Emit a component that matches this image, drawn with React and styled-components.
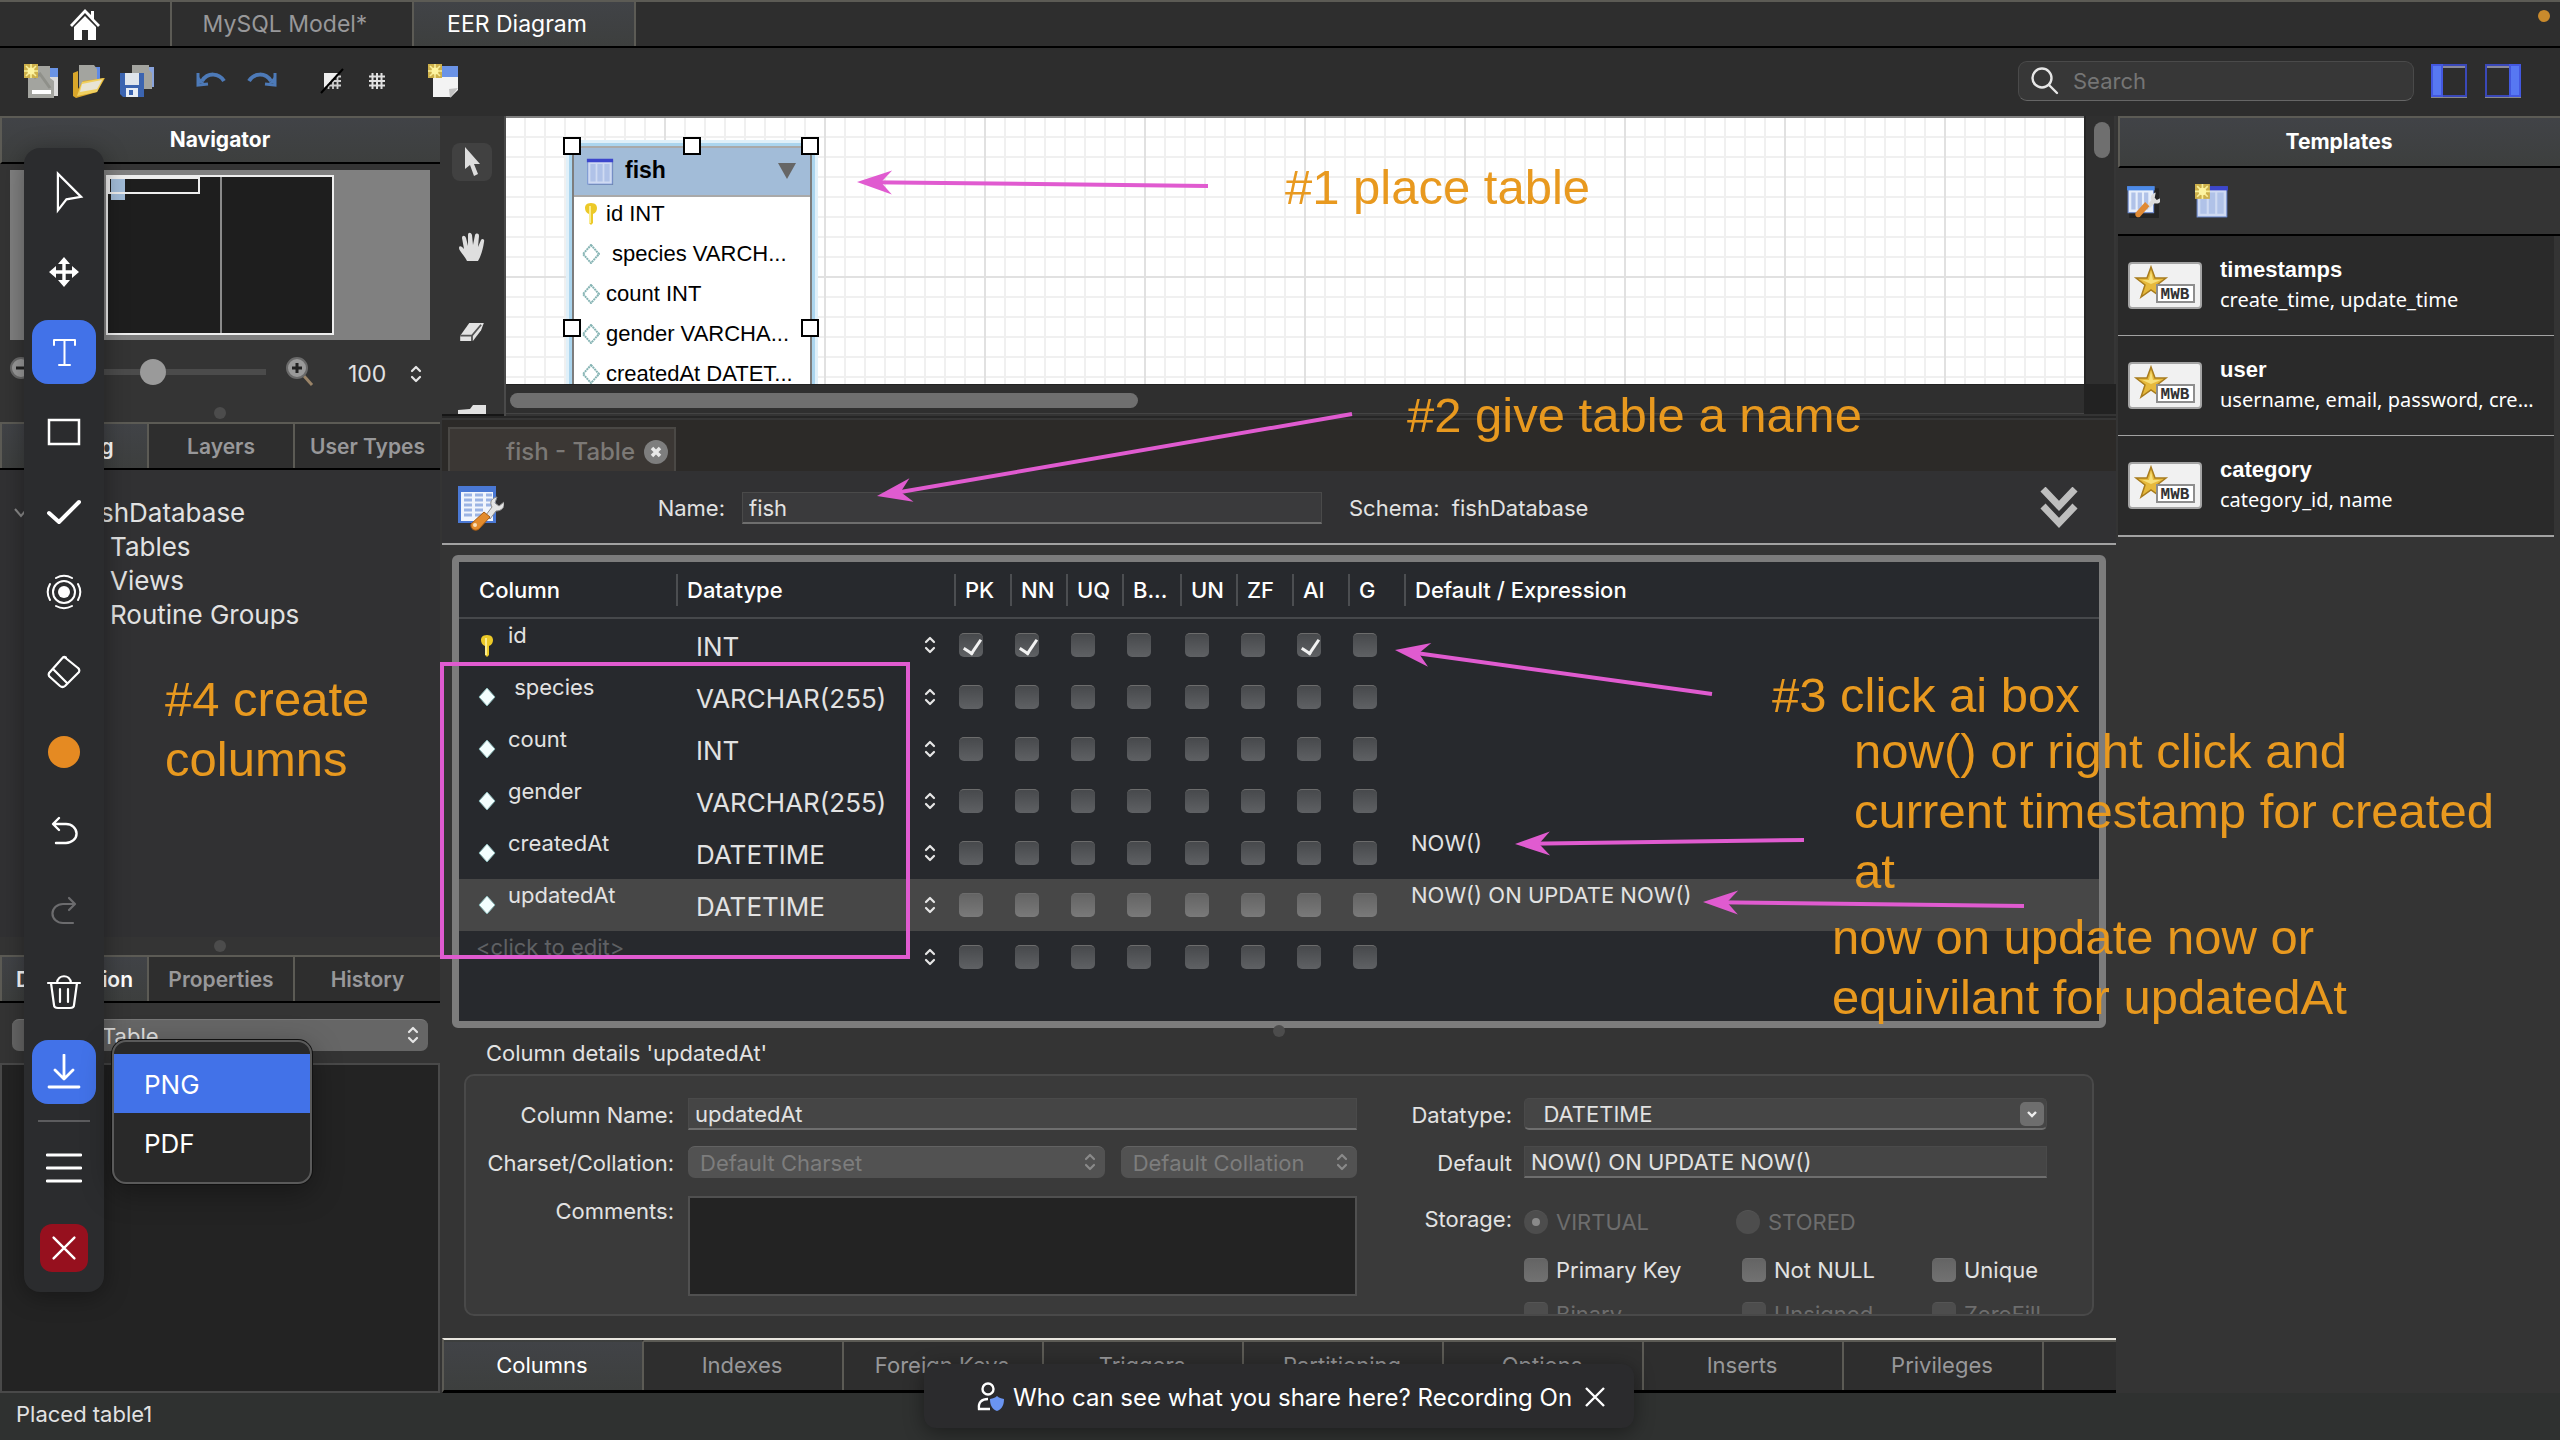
import React from "react";
import styled, { createGlobalStyle, css } from "styled-components";

const ui = `Inter, "Liberation Sans", sans-serif`;
const helv = `"Liberation Sans", Arial, sans-serif`;
const pink = "#e05bd0";

const Global = createGlobalStyle`
  * { box-sizing: border-box; }
  body { margin: 0; background: #343434; font-family: ${ui}; font-size: 22px; color: #e2e2e2; }
  button, input, select, textarea { font: inherit; color: inherit; margin: 0; }
  button { border: 0; background: none; padding: 0; }
  svg { display: block; }
`;

const Page = styled.div`
  position: relative;
  display: flex;
  flex-direction: column;
  min-height: 100vh;
  overflow: hidden;
`;

/* ---------- top bars ---------- */
const TopTabs = styled.nav`
  display: flex;
  height: 48px;
  border-top: 2px solid #5c5b55;
  border-bottom: 2px solid #000;
  background: #2e2e2e;
`;
const TopTab = styled.button`
  width: ${(p) => p.$w}px;
  display: flex;
  align-items: center;
  justify-content: center;
  padding-right: ${(p) => (p.$icon ? 0 : 14)}px;
  border-right: 2px solid #5c5b55;
  font-size: 23px;
  color: ${(p) => (p.$on ? "#fff" : "#98989a")};
  background: ${(p) => (p.$on ? "linear-gradient(#414347, #3d3f3e)" : "transparent")};
`;
const RecDot = styled.span`
  width: 12px;
  height: 12px;
  margin: 8px 10px 0 auto;
  border-radius: 50%;
  background: #c98a2c;
`;
const Toolbar = styled.div`
  display: flex;
  align-items: center;
  height: 68px;
  padding: 0 39px 2px 24px;
  background: #2d2d2d;
`;
const ToolGroup = styled.div`
  display: flex;
  align-items: center;
  gap: ${(p) => p.$gap}px;
  margin-right: ${(p) => p.$after}px;
`;
const SearchBox = styled.label`
  display: flex;
  align-items: center;
  gap: 12px;
  width: 396px;
  height: 40px;
  margin-left: auto;
  margin-right: 17px;
  padding: 0 12px;
  border: 1px solid #4a4a4a;
  border-bottom-color: #666;
  border-radius: 9px;
  background: #373737;
`;
const SearchInput = styled.input`
  flex: 1;
  min-width: 0;
  border: 0;
  outline: 0;
  background: transparent;
  font-size: 22px;
  &::placeholder { color: #757575; }
`;

/* ---------- main split ---------- */
const Main = styled.main`
  flex: 1;
  display: flex;
  gap: 2px;
`;
const LeftCol = styled.aside`
  width: 440px;
  display: flex;
  flex-direction: column;
`;
const CenterCol = styled.section`
  flex: 1;
  min-width: 0;
  display: flex;
  flex-direction: column;
`;
const RightCol = styled.aside`
  width: 442px;
`;
const PanelTitle = styled.h2`
  margin: 0;
  height: ${(p) => p.$h}px;
  display: flex;
  align-items: center;
  justify-content: center;
  padding: 0 2px 2px 0;
  font-size: 21px;
  font-weight: 700;
  color: #fff;
  border-top: 2px solid #5c5b55;
  border-left: 2px solid #5c5b55;
  border-bottom: 2px solid #000;
  background: linear-gradient(#414347, #3d3f3e);
`;
const PanelTabs = styled.div`
  display: grid;
  grid-template-columns: 149px 146px 1fr;
  height: 48px;
  border-top: 2px solid #5c5b55;
  border-bottom: 2px solid #000;
`;
const PanelTab = styled.button`
  font-size: 21px;
  font-weight: 600;
  color: ${(p) => (p.$on ? "#fff" : "#98989a")};
  background: ${(p) => (p.$on ? "linear-gradient(#414347, #3d3f3e)" : "#2e2e2e")};
  border-right: 2px solid #5c5b55;
  &:first-child { border-left: 2px solid #5c5b55; }
  &:last-child { border-right: 0; }
`;
const Grip = styled.div`
  height: 18px;
  display: flex;
  align-items: center;
  justify-content: center;
  &::after {
    content: "";
    width: 12px;
    height: 12px;
    border-radius: 50%;
    background: #4c4c4c;
  }
`;

/* ---------- navigator ---------- */
const NavView = styled.div`
  height: 170px;
  margin: 6px 10px 0;
  padding: 5px 96px;
  background: #808080;
`;
const NavPage = styled.div`
  position: relative;
  height: 160px;
  border: 2px solid #eee;
  background: linear-gradient(90deg, transparent 112px, #8a8a8a 112px, #8a8a8a 114px, transparent 114px) #1e1e1e;
`;
const NavTable = styled.div`
  position: absolute;
  left: 3px;
  top: 1px;
  width: 14px;
  height: 22px;
  background: #a2bcd8;
`;
const NavPort = styled.div`
  position: absolute;
  left: 0;
  top: 0;
  width: 92px;
  height: 17px;
  border: 2px solid #eee;
`;
const ZoomRow = styled.div`
  display: flex;
  align-items: center;
  height: 64px;
  padding: 0 18px 0 10px;
`;
const ZoomSlider = styled.input`
  appearance: none;
  width: 220px;
  height: 26px;
  margin: 0 20px 0 8px;
  background: linear-gradient(#4b4b4b, #4b4b4b) center / 100% 6px no-repeat;
  border-radius: 3px;
  &::-webkit-slider-thumb {
    appearance: none;
    width: 26px;
    height: 26px;
    border-radius: 50%;
    background: #9a9a9a;
  }
`;
const ZoomValue = styled.label`
  display: flex;
  align-items: center;
  justify-content: flex-end;
  gap: 18px;
  flex: 1;
  padding-top: 4px;
`;
const ZoomInput = styled.input`
  width: 44px;
  padding: 0;
  border: 0;
  background: transparent;
  font-size: 23px;
`;

/* ---------- catalog tree ---------- */
const Tree = styled.ul`
  flex: 1;
  margin: 0;
  padding: 26px 0 0 14px;
  list-style: none;
  background: #313133;
  font-size: 26px;
  line-height: 34px;
`;
const TreeNode = styled.li`
  display: flex;
  align-items: center;
  gap: 56px;
  padding-left: ${(p) => p.$indent}px;
`;
const SelectWrap = styled.span`
  position: relative;
  display: flex;
  align-items: center;
  ${(p) => p.$grow && css`flex: ${p.$grow} 1 0;`}
  & > svg {
    position: absolute;
    right: ${(p) => p.$right || 9}px;
    pointer-events: none;
  }
`;
const Popup = styled.select`
  appearance: none;
  width: 100%;
  height: 32px;
  padding: 0 12px;
  border: 0;
  border-top: 1px solid #777;
  border-radius: 7px;
  background: #666;
  opacity: 1;
  &:disabled { background: #525252; border-top-color: #626262; color: #7d7d7d; }
`;
const DescSelect = styled.div`
  padding: 16px 12px 12px;
  & select { padding-left: 90px; }
`;
const DescText = styled.textarea`
  height: 330px;
  resize: none;
  border: 2px solid #494949;
  background: #232323;
  outline: 0;
`;

/* ---------- canvas ---------- */
const CanvasRow = styled.div`
  display: flex;
  height: 300px;
`;
const ToolStrip = styled.div`
  width: 62px;
  display: flex;
  flex-direction: column;
  align-items: center;
  gap: 47px;
  padding-top: 27px;
  padding-right: 2px;
  overflow: hidden;
  border-bottom: 2px solid #161616;
`;
const StripButton = styled.button`
  flex: none;
  display: flex;
  align-items: center;
  justify-content: center;
  width: 40px;
  height: 38px;
  border-radius: 8px;
  background: ${(p) => (p.$on ? "#414141" : "transparent")};
`;
const CanvasArea = styled.div`
  flex: 1;
  min-width: 0;
  display: grid;
  grid-template-columns: 1fr 32px;
  grid-template-rows: 268px 30px;
  border-left: 2px solid #4a4a4a;
`;
const Sheet = styled.div`
  position: relative;
  overflow: hidden;
  border-top: 2px solid #808080;
  background:
    repeating-linear-gradient(90deg, transparent 0 158px, #e1e1e1 158px 160px),
    linear-gradient(transparent 158px, #e1e1e1 158px, #e1e1e1 160px, transparent 160px),
    repeating-linear-gradient(90deg, transparent 0 18px, #f0f0f0 18px 20px),
    repeating-linear-gradient(180deg, transparent 0 18px, #f0f0f0 18px 20px),
    #fff;
`;
const VScroll = styled.div`
  padding: 6px 0 0 8px;
  background: #2f2f2f;
  border-left: 2px solid #262626;
  border-right: 2px solid #363636;
`;
const HScroll = styled.div`
  padding: 8px 4px;
  background: #2f2f2f;
  border-top: 1px solid #222;
  border-bottom: 1px solid #444;
`;
const Thumb = styled.div`
  width: ${(p) => p.$w};
  height: ${(p) => p.$h}px;
  border-radius: 8px;
  background: #6f6f6f;
`;
const Corner = styled.div`
  background: #222;
`;
const Node = styled.div`
  position: absolute;
  left: 66px;
  top: 28px;
  width: 240px;
  height: 364px;
  border: 2px solid #8a8a8a;
  border-color: #a9a9a9 #7d7d7d;
  border-radius: 10px 10px 0 0;
  background: #fff;
  color: #000;
  font-family: ${helv};
  box-shadow: 0 0 0 3px #abd5ee, 0 0 0 6px #e0f0f9;
`;
const NodeHead = styled.div`
  display: flex;
  align-items: center;
  height: 49px;
  gap: 11px;
  padding: 0 14px 2px 12px;
  border-bottom: 2px solid #a9a9a9;
  border-radius: 8px 8px 0 0;
  background: #a2bcd8;
  font-size: 23px;
  font-weight: 700;
  & > svg:last-child { margin-left: auto; }
`;
const NodeRow = styled.div`
  display: flex;
  align-items: center;
  gap: 6px;
  height: 40px;
  padding: 0 0 6px 8px;
  white-space: pre;
  & > svg { flex: none; }
`;
const Handle = styled.span`
  position: absolute;
  left: ${(p) => p.$x}px;
  top: ${(p) => p.$y}px;
  width: 18px;
  height: 18px;
  border: 2px solid #000;
  background: #fff;
`;

/* ---------- table editor ---------- */
const Editor = styled.div`
  flex: 1;
  display: flex;
  flex-direction: column;
  border-top: 2px solid #262626;
`;
const EditorTabs = styled.div`
  height: 53px;
  padding: 9px 6px 0;
  background: #2c2a28;
  border-top: 2px solid #363636;
`;
const EditorTab = styled.div`
  display: flex;
  align-items: center;
  justify-content: flex-end;
  gap: 8px;
  width: 228px;
  height: 44px;
  margin-top: -2px;
  padding: 3px 5px 0;
  border: 2px solid #4a4845;
  border-bottom: 0;
  background: #3b3734;
  color: #7c7976;
  font-size: 24px;
  font-weight: 500;
`;
const EditorHead = styled.div`
  display: flex;
  align-items: center;
  height: 74px;
  padding: 2px 38px 0 16px;
  background: #313133;
  border-bottom: 2px solid #a2a2a2;
`;
const HeadLabel = styled.label`
  width: ${(p) => p.$w}px;
  margin-right: 17px;
  text-align: right;
`;
const Field = styled.input`
  width: ${(p) => p.$w || "100%"};
  height: 32px;
  padding: 1px 6px 0;
  border: 1px solid #4a4a4a;
  border-bottom: 2px solid #6e6e6e;
  border-radius: ${(p) => (p.$combo ? "5px" : "0")};
  background: ${(p) => p.$bg || "#454545"};
  outline: 0;
`;
const SchemaText = styled.span`
  margin: 0 auto 0 27px;
  white-space: pre;
`;
const GridFrame = styled.div`
  height: 473px;
  margin: 10px 10px 0;
  border: 7px solid #7c7c7c;
  border-radius: 6px;
  background: #27292d;
`;
const Grid = styled.table`
  width: 100%;
  border-collapse: collapse;
  table-layout: fixed;
`;
const HeadCell = styled.th`
  height: 56px;
  padding: 1px 0 0;
  border-bottom: 2px solid #46484b;
  text-align: left;
  font-size: 22px;
  font-weight: 500;
  color: #fff;
`;
const HeadText = styled.span`
  display: flex;
  align-items: center;
  height: 32px;
  padding-left: ${(p) => (p.$first ? 20 : 9)}px;
  border-left: ${(p) => (p.$first ? 0 : 2)}px solid #4c4e51;
`;
const GridRow = styled.tr`
  background: ${(p) => (p.$on ? "#474747" : "transparent")};
  --box: ${(p) => (p.$on ? "linear-gradient(#646464, #7a7a7a)" : "linear-gradient(#47494c, #5f6164)")};
`;
const Cell = styled.td`
  height: 52px;
  padding: ${(p) => p.$pad || "0"};
  vertical-align: ${(p) => (p.$top ? "top" : "middle")};
  line-height: 26px;
  white-space: pre;
`;
const NameLine = styled.div`
  display: flex;
  gap: 12px;
  color: ${(p) => (p.$dim ? "#5f6164" : "inherit")};
  & > svg { flex: none; margin-top: 13px; }
`;
const TypeSelect = styled.select`
  appearance: none;
  width: 100%;
  height: 52px;
  padding: 4px 0 0 20px;
  border: 0;
  background: transparent;
  font-size: 26px;
`;
const Tick = styled.input`
  appearance: none;
  position: relative;
  flex: none;
  display: block;
  width: 24px;
  height: 24px;
  border-radius: ${(p) => (p.type === "radio" ? "50%" : "5px")};
  border-top: 1px solid #6c6c6c;
  background: var(--box, linear-gradient(#646464, #727272));
  &:disabled { background: #4d4d4d; border-top-color: #555; }
  ${(p) => p.type === "checkbox" && css`
    &:checked::after {
      content: "";
      position: absolute;
      left: 8px;
      top: 2px;
      width: 8px;
      height: 15px;
      border: solid #f2f2f2;
      border-width: 0 3px 3px 0;
      transform: rotate(34deg);
    }
  `}
  ${(p) => p.type === "radio" && css`
    &:checked::after {
      content: "";
      position: absolute;
      left: 8px;
      top: 7px;
      width: 8px;
      height: 8px;
      border-radius: 50%;
      background: #8a8a8a;
    }
  `}
`;
const EditorGrip = styled(Grip)`
  height: 12px;
  margin-top: -3px;
`;
const DetailsTitle = styled.h3`
  margin: 0;
  padding: 4px 44px 8px;
  font-size: 22px;
  line-height: 25px;
  font-weight: 400;
`;
const Details = styled.div`
  display: flex;
  height: 242px;
  margin: 0 22px 22px;
  padding: 22px 45px 0 0;
  overflow: hidden;
  border: 2px solid #494949;
  border-radius: 10px;
  background: #3a3a3a;
`;
const FormGrid = styled.div`
  flex: ${(p) => p.$flex} 1 0;
  display: grid;
  grid-template-columns: ${(p) => p.$label}px 1fr;
  column-gap: ${(p) => p.$gap}px;
  row-gap: 16px;
  align-content: start;
`;
const Label = styled.label`
  line-height: 34px;
  height: 32px;
  text-align: right;
  white-space: nowrap;
`;
const PairRow = styled.div`
  display: flex;
  gap: 16px;
`;
const Comments = styled.textarea`
  height: 100px;
  margin-top: 2px;
  resize: none;
  border: 2px solid #505050;
  background: #232323;
  outline: 0;
`;
const StorageLabel = styled(Label)`
  margin-top: 8px;
`;
const Choices = styled.div`
  display: grid;
  grid-template-columns: ${(p) => p.$cols};
  height: 32px;
  align-items: center;
`;
const StorageChoices = styled(Choices)`
  margin-top: 12px;
`;
const ChoiceRows = styled.div`
  grid-column: 2;
  display: grid;
  gap: 12px;
`;
const Choice = styled.label`
  display: flex;
  align-items: center;
  gap: 8px;
  white-space: nowrap;
  color: ${(p) => (p.$dim ? "#6d6d6d" : "inherit")};
`;
const ComboButton = styled.span`
  position: absolute;
  right: 3px;
  top: 4px;
  width: 24px;
  height: 24px;
  display: flex;
  align-items: center;
  justify-content: center;
  border-radius: 5px;
  background: #6e6e6e;
`;
const BottomTabs = styled.div`
  display: flex;
  height: 55px;
  margin-top: auto;
  border-top: 2px solid #e8e6df;
  border-bottom: 3px solid #000;
  border-left: 2px solid #5c5b55;
  background: #2e2e2e;
`;
const BottomTab = styled.button`
  flex: 0 0 200px;
  padding: 0 2px 2px 0;
  border-top: 2px solid ${(p) => (p.$on ? "transparent" : "#5c5b55")};
  border-right: 2px solid #5c5b55;
  color: ${(p) => (p.$on ? "#fff" : "#98989a")};
  background: ${(p) => (p.$on ? "linear-gradient(#414347, #3d3f3e)" : "transparent")};
`;
const BottomRest = styled.div`
  flex: 1;
  border-top: 2px solid #5c5b55;
`;

/* ---------- templates ---------- */
const TemplateTools = styled.div`
  display: flex;
  align-items: center;
  gap: 35px;
  height: 68px;
  padding-left: 8px;
  border-bottom: 2px solid #000;
`;
const TemplateList = styled.ul`
  margin: 0 6px 0 0;
  padding: 0;
  list-style: none;
  background: #2a2a2a;
  border-bottom: 1px solid #a2a2a2;
`;
const TemplateItem = styled.li`
  display: flex;
  align-items: center;
  gap: 18px;
  height: 100px;
  padding: 0 6px 2px 10px;
  border-bottom: 1px solid #a2a2a2;
  color: #fff;
`;
const TemplateText = styled.div`
  min-width: 0;
  font-family: "Noto Sans", sans-serif;
  font-size: 20px;
  line-height: 30px;
  & > p { margin: 0; white-space: nowrap; }
`;
const TemplateName = styled.strong`
  font-family: ${helv};
  font-size: 22px;
`;
const Status = styled.footer`
  height: 47px;
  padding: 7px 16px;
  line-height: 28px;
  background: #2f3130;
`;

/* ---------- overlays ---------- */
const Markup = styled.svg`
  position: absolute;
  left: 0;
  top: 0;
  pointer-events: none;
`;
const Note = styled.p`
  position: absolute;
  left: ${(p) => p.$x}px;
  top: ${(p) => p.$y}px;
  margin: 0;
  font-family: ${helv};
  font-weight: 300;
  font-size: 49px;
  line-height: 60px;
  white-space: pre;
  color: #e8991f;
`;
const Palette = styled.div`
  position: absolute;
  left: 24px;
  top: 148px;
  width: 80px;
  display: flex;
  flex-direction: column;
  align-items: center;
  gap: 16px;
  padding: 12px 0 20px;
  border-radius: 16px;
  background: #2b2c2e;
  box-shadow: 0 4px 24px rgba(0, 0, 0, 0.35);
`;
const PaletteButton = styled.button`
  display: flex;
  align-items: center;
  justify-content: center;
  width: 64px;
  height: 64px;
  border-radius: 16px;
  color: #fff;
  background: ${(p) => (p.$on ? "#4272e8" : "transparent")};
`;
const PaletteRule = styled.hr`
  width: 52px;
  height: 2px;
  margin: 0 0 -2px;
  border: 0;
  background: #5c5c5e;
`;
const CloseButton = styled(PaletteButton)`
  width: 48px;
  height: 48px;
  margin-top: 8px;
  border-radius: 12px;
  background: #96101e;
`;
const Swatch = styled.span`
  width: 32px;
  height: 32px;
  border-radius: 50%;
  background: #e58a22;
`;
const ExportMenu = styled.div`
  position: absolute;
  left: 112px;
  top: 1040px;
  width: 200px;
  padding: 12px 0;
  height: 144px;
  border: 2px solid #5a5a5a;
  border-radius: 14px;
  background: #292929;
  box-shadow: 0 0 0 1px #111, 0 8px 30px rgba(0, 0, 0, 0.35);
`;
const MenuItem = styled.button`
  display: block;
  width: 100%;
  height: 59px;
  padding: 2px 0 0 30px;
  text-align: left;
  font-size: 26px;
  color: #fff;
  background: ${(p) => (p.$on ? "#4272e8" : "transparent")};
`;
const Toast = styled.div`
  position: absolute;
  left: 924px;
  bottom: 12px;
  width: 710px;
  height: 64px;
  display: flex;
  align-items: center;
  padding: 2px 29px 0 53px;
  border-radius: 12px;
  background: #2b2b2d;
  box-shadow: 0 4px 20px rgba(0, 0, 0, 0.4);
  color: #fff;
  font-size: 24px;
  white-space: nowrap;
  & > span { margin: 0 auto 0 8px; }
`;

/* ---------- icons ---------- */
const Stepper = ({ color = "#e6e6e6" }) => (
  <svg width="12" height="18" viewBox="0 0 12 18" fill="none" stroke={color} strokeWidth="2.2" strokeLinecap="round" strokeLinejoin="round">
    <path d="M2 6l4-4 4 4M2 12l4 4 4-4" />
  </svg>
);
const Spark = () => (
  <g>
    <rect x="0" y="0" width="14" height="14" fill="#cdb04a" />
    <path d="M7 0v14M0 7h14M2 2l10 10M12 2L2 12" stroke="#f8ee98" strokeWidth="1.600" />
    <circle cx="7" cy="7" r="3.500" fill="#fdf4a0" />
  </g>
);
const NewModelIcon = () => (
  <svg width="34" height="34" viewBox="0 0 34 34">
    <path d="M24 4h10v28h-6z" fill="#dcdcdc" /><path d="M26 4h8v9h-8z" fill="#6a94e6" />
    <path d="M4 2h22v12l4 3v17H4z" fill="#a3a49f" />
    <path d="M10 14l6-4 10 14" stroke="#8f908a" strokeWidth="3" fill="none" />
    <path d="M8 26h19v4H8z" fill="#fff" /><Spark />
  </svg>
);
const OpenIcon = () => (
  <svg width="34" height="34" viewBox="0 0 34 34">
    <path d="M20 3h8v14h-8z" fill="#5f8ae6" /><path d="M7 1h15l3 4v18H7z" fill="#a3a49f" />
    <path d="M1 9l5-2v18l5-8 22-3-8 14-21 6-3-2z" fill="#d9a62a" />
    <path d="M5 32l5-14 22-4-7 14z" fill="#f0d060" /><path d="M10 20l20-4-5 9-17 3z" fill="#e8e4d4" />
  </svg>
);
const SaveIcon = () => (
  <svg width="34" height="34" viewBox="0 0 34 34">
    <path d="M26 3h8v20h-8z" fill="#8aa4dc" /><path d="M12 1h17v5l3 3v16H12z" fill="#a3a49f" />
    <path d="M0 9h24v24H3l-3-3z" fill="#3b64b0" /><path d="M5 9h14v12H5z" fill="#dfe5ec" /><path d="M6 24h12v9H6z" fill="#e8eef6" /><path d="M9 26h4v5H9z" fill="#3b64b0" />
  </svg>
);
const UndoArrow = ({ flip }) => (
  <svg width="31" height="20" viewBox="0 0 31 20">
    <g transform={flip ? "translate(31 0) scale(-1 1)" : undefined}>
      <path d="M6 10C12 1 23 2 28 10" fill="none" stroke="#4d7ab8" strokeWidth="4" />
      <path d="M2 2v12l10-1" fill="none" stroke="#4d7ab8" strokeWidth="3" />
      <path d="M3 12V6l5 6z" fill="#4d7ab8" />
    </g>
  </svg>
);
const hash = "M3.500 0v16M8 0v16M12.500 0v16M0 3.500h16M0 8h16M0 12.500h16";
const GridIcon = () => (
  <svg width="16" height="16" viewBox="0 0 16 16"><path d={hash} stroke="#e0e0e0" strokeWidth="2" /></svg>
);
const GridOffIcon = () => (
  <svg width="24" height="26" viewBox="0 0 24 26">
    <path d={hash} stroke="#d0d0d0" strokeWidth="1.800" transform="translate(5 5)" />
    <path d="M4 5h14L4 20z" fill="#eee" />
    <path d="M1 25L23 1" stroke="#000" strokeWidth="2" />
  </svg>
);
const NewDocIcon = () => (
  <svg width="31" height="34" viewBox="0 0 31 34">
    <path d="M5 2h25v24l-7 7H5z" fill="#f3f3f3" /><path d="M5 2h25v11H5z" fill="#6b93e6" /><path d="M22 34l-1-9 9-1z" fill="#c2c2c2" /><Spark />
  </svg>
);
const SideIcon = ({ right }) => (
  <svg width="36" height="34" viewBox="0 0 36 34">
    <path d="M0 33h36" stroke="#8a8a8a" strokeWidth="2" />
    <rect x="1" y="1" width="34" height="31" fill="none" stroke="#3a48b8" strokeWidth="2" />
    <rect x={right ? 25 : 1} y="1" width="10" height="31" fill="#5778f2" stroke="#4358e0" strokeWidth="2" />
    <path d={right ? "M2 3h22" : "M12 3h22"} stroke="#8a8a9a" strokeWidth="2" />
  </svg>
);
const ZoomIcon = ({ sign }) => (
  <svg width="28" height="30" viewBox="0 0 28 30">
    <path d="M18 19l8 9" stroke="#9a8468" strokeWidth="3" />
    <circle cx="11" cy="11" r="10" fill="#9a9a9a" stroke="#6a6a6a" strokeWidth="2" />
    <path d={sign === "+" ? "M6 11h10M11 6v10" : "M6 11h10"} stroke="#222" strokeWidth="3" />
  </svg>
);
const TableIcon = ({ size = 28, spark, wrench }) => (
  <svg width={size} height={size} viewBox="0 0 32 32">
    <rect x="3" y="4" width="28" height="28" fill="#000" opacity=".3" />
    <rect x="2" y="3" width={wrench ? 24 : 28} height={wrench ? 24 : 28} fill={wrench ? "#e6eefb" : "#cfdaf2"} stroke="#6f8cd0" />
    <path d={wrench ? "M5 8h4v16H5zM11 8h4v16h-4zM17 8h4v16h-4z" : "M5 8h6v20H5zM13 8h6v20h-6zM21 8h6v20h-6z"} fill="#b0c2e8" />
    <rect x="1" y="2" width={wrench ? 26 : 30} height="4" fill={wrench ? "#4c8ae8" : "#3c46cc"} />
    {spark && <Spark />}
    {wrench && (
      <g>
        <path d="M19 21l5-6c-2-4 1-6 4-7l-1 5 2 2 4-2c0 5-3 6-6 5l-5 5z" fill="#dcdcdc" />
        <path d="M18 17l4 4-9 10c-3 1-5-1-4-4z" fill="#e08a34" />
      </g>
    )}
  </svg>
);
const BigTableIcon = () => (
  <svg width="46" height="46" viewBox="0 0 46 46">
    <rect x="0" y="1" width="38" height="37" fill="#4a78d4" />
    <rect x="3" y="7" width="32" height="29" fill="#f1f5fd" />
    <path d="M6 10h8M17 10h8M28 10h6M6 15h8M17 15h8M28 15h6M6 20h8M17 20h8M28 20h6M6 25h8M17 25h8M6 30h8M17 30h8" stroke="#9cb4e4" strokeWidth="3" />
    <path d="M28 30l6-8c-3-5 0-9 5-10l-2 6 4 3 5-4c1 6-3 9-8 9l-6 8z" fill="#e4e4e4" stroke="#8a8a8a" />
    <path d="M26 27l6 5-11 12c-4 3-9 0-8-5z" fill="#e38b2c" stroke="#a85c12" />
    <circle cx="17" cy="40" r="2" fill="#fbe0b8" />
  </svg>
);
const KeyIcon = () => (
  <svg width="18" height="22" viewBox="0 0 18 22">
    <path d="M9 0C4 0 3 3 3 5s1 5 4 6v9l2 2 2-2v-9c3-1 4-4 4-6s-1-5-6-5z" fill="#ecc928" />
    <path d="M8 3v17" stroke="#fbec8e" strokeWidth="2" />
  </svg>
);
const Diamond = ({ hollow }) => (
  <svg width="18" height="20" viewBox="0 0 18 20">
    <path d="M9 1l8 9-8 9-8-9z" fill={hollow ? "#fff" : "#f4ffff"} stroke="#86b4b4" strokeWidth={hollow ? 2 : 1} strokeDasharray={hollow ? "2 .6" : undefined} />
  </svg>
);
const StarCard = () => (
  <svg width="74" height="48" viewBox="0 0 74 48">
    <rect x="1" y="2" width="72" height="45" rx="3" fill="#f1f1f1" stroke="#a4a4a4" strokeWidth="2" />
    <path d="M23 6l4 11h11l-9 7 4 12-10-7-10 7 4-12-9-7h11z" fill="#e6b93c" stroke="#a87c1e" strokeWidth="1.500" />
    <path d="M23 10l2 9h8l-10 4-9-4h7z" fill="#f6df7a" />
    <rect x="29" y="24" width="37" height="17" fill="#fff" stroke="#8e8e8e" strokeWidth="2" />
    <text x="47" y="38" textAnchor="middle" fontFamily="Liberation Mono, monospace" fontWeight="700" fontSize="16" fill="#333">MWB</text>
  </svg>
);

const P = ({ children, w = 36, sw = 2.4, color = "#fff" }) => (
  <svg width={w} height={w} viewBox="0 0 36 36" fill="none" stroke={color} strokeWidth={sw} strokeLinecap="round" strokeLinejoin="round">{children}</svg>
);
const paletteItems = [
  ["Select", <P sw={1.8} w={44}><path d="M13 3v30l7-9 12-2z" strokeLinejoin="miter" /></P>],
  ["Move", <P sw={3.4}><path d="M18 7v22M7 18h22" /><path d="M18 3l6 7H12zM18 33l6-7H12zM3 18l7-6v12zM33 18l-7-6v12z" fill="#fff" stroke="none" /></P>],
  ["Text", <P sw={2}><path d="M8 11V6h21v5M18.500 6v25M13 31h11" /></P>, true],
  ["Rectangle", <P sw={2.5}><path d="M3 6h30v24H3z" strokeLinejoin="miter" /></P>],
  ["Check", <P sw={4}><path d="M3 19l10 9L33 8" /></P>],
  ["Spotlight", <P sw={2}><circle cx="18" cy="18" r="6" fill="#fff" stroke="none" /><circle cx="18" cy="18" r="11" /><path d="M10 4a16 16 0 0 1 16 0M10 32a16 16 0 0 0 16 0M4 10a16 16 0 0 0 0 16M32 10a16 16 0 0 1 0 16" /></P>],
  ["Eraser", <P sw={2.2}><path d="M19 3.500L32 14a3 3 0 0 1 0 5L19 32a4 4 0 0 1-5 0L4 23a3 3 0 0 1 0-5L16 4.500a3 3 0 0 1 4-1zM7 15l14 14" /></P>],
  ["Colour", <Swatch />],
  ["Undo", <P><path d="M13 4L7 10l6 6M8 10h12a10 9 0 0 1 0 19H10" /></P>],
  ["Redo", <P color="#6c6c6e" sw={2.2}><path d="M23 4l6 6-6 6M28 10H17a10 9 0 0 0 0 19h10" /></P>],
  ["Clear", <P sw={2.2}><path d="M2 9h32M11 9c1-9 13-9 14 0M5 9l3 22c0 2 2 3 4 3h12c2 0 4-1 4-3l3-22M14 15v13M22 15v13" /></P>],
  ["Save", <P sw={2.8}><path d="M18 1v23M9 16l9 9 9-9M3 33h30" /></P>, true],
];

/* ---------- data ---------- */
const flags = ["PK", "NN", "UQ", "B...", "UN", "ZF", "AI", "G"];
const columns = [
  { name: "id", type: "INT", on: ["PK", "NN", "AI"], key: true },
  { name: " species", type: "VARCHAR(255)" },
  { name: "count", type: "INT" },
  { name: "gender", type: "VARCHAR(255)" },
  { name: "createdAt", type: "DATETIME", def: "NOW()" },
  { name: "updatedAt", type: "DATETIME", def: "NOW() ON UPDATE NOW()", selected: true },
  { name: "<click to edit>", type: "", blank: true },
];
const nodeRows = ["id INT", " species VARCH...", "count INT", "gender VARCHA...", "createdAt DATET..."];
const handles = [[57, 19], [177, 19], [295, 19], [57, 201], [295, 201]];
const templates = [
  ["timestamps", "create_time, update_time"],
  ["user", "username, email, password, cre..."],
  ["category", "category_id, name"],
];
const arrows = [
  [1208, 186, 857, 182],
  [1352, 414, 877, 496],
  [1712, 694, 1395, 650],
  [1804, 840, 1515, 844],
  [2024, 906, 1703, 902],
];
const notes = [
  [1285, 157, "#1 place table"],
  [1407, 385, "#2 give table a name"],
  [1772, 665, "#3 click ai box"],
  [1854, 721, "now() or right click and\ncurrent timestamp for created\nat"],
  [1832, 907, "now on update now or\nequivilant for updatedAt"],
  [165, 669, "#4 create\ncolumns"],
];

function Arrow({ x1, y1, x2, y2 }) {
  const deg = (Math.atan2(y2 - y1, x2 - x1) * 180) / Math.PI;
  return (
    <g>
      <path d={`M${x1} ${y1}L${x2} ${y2}`} stroke={pink} strokeWidth="4" strokeDasharray={`${Math.hypot(x2 - x1, y2 - y1) - 12} 99`} />
      <path d="M0 0L-35 -12L-24 0L-35 12Z" fill={pink} transform={`translate(${x2} ${y2}) rotate(${deg})`} />
    </g>
  );
}

function Navigator() {
  return (
    <>
      <PanelTitle $h={48}>Navigator</PanelTitle>
      <NavView><NavPage><NavTable /><NavPort /></NavPage></NavView>
      <ZoomRow>
        <ZoomIcon sign="-" />
        <ZoomSlider type="range" min="0" max="200" defaultValue="97" aria-label="Zoom" />
        <ZoomIcon sign="+" />
        <ZoomValue><ZoomInput aria-label="Zoom percent" defaultValue="100" /><Stepper /></ZoomValue>
      </ZoomRow>
      <Grip />
    </>
  );
}

function Canvas() {
  return (
    <CanvasRow>
      <ToolStrip>
        <StripButton $on aria-label="Pointer">
          <svg width="18" height="32" viewBox="0 0 18 32"><path d="M2 1v22l5-4 4 11 4-2-4-10h6z" fill="#ddd" /></svg>
        </StripButton>
        <StripButton aria-label="Hand">
          <svg width="28" height="30" viewBox="0 0 28 30"><path d="M9 29c-2-5-8-10-8-13s3-2 5 1L4 6c0-3 3-3 4 0l2 8V3c0-3 3-3 4 0l1 10 2-10c1-2 4-2 4 1l-1 11 3-7c1-2 4-1 3 2-1 7-3 14-6 19z" fill="#dedede" /></svg>
        </StripButton>
        <StripButton aria-label="Eraser">
          <svg width="26" height="20" viewBox="0 0 28 22"><path d="M11 1h16l-3 8-9 12H1v-6z" fill="#e2e2e2" /><path d="M1 15h13l10-12M14 15v6" stroke="#555" strokeWidth="2" fill="none" /></svg>
        </StripButton>
        <StripButton aria-label="Layer">
          <svg width="30" height="26" viewBox="0 0 30 26"><path d="M1 6l12-1 3-4h13v25H1z" fill="#e2e2e2" /></svg>
        </StripButton>
      </ToolStrip>
      <CanvasArea>
        <Sheet>
          <Node>
            <NodeHead>
              <TableIcon size={28} />
              fish
              <svg width="18" height="16" viewBox="0 0 18 16"><path d="M0 0h18L9 16z" fill="#666" /></svg>
            </NodeHead>
            {nodeRows.map((t, i) => (
              <NodeRow key={t}>{i === 0 ? <KeyIcon /> : <Diamond hollow />}<span>{t}</span></NodeRow>
            ))}
          </Node>
          {handles.map(([x, y]) => <Handle key={`${x}-${y}`} $x={x} $y={y} />)}
        </Sheet>
        <VScroll><Thumb $w="16px" $h={36} /></VScroll>
        <HScroll><Thumb $w="40%" $h={15} /></HScroll>
        <Corner />
      </CanvasArea>
    </CanvasRow>
  );
}

function ColumnGrid() {
  return (
    <GridFrame>
      <Grid>
        <colgroup>
          <col width="217" /><col width="278" />
          {flags.map((f) => <col key={f} width={f === "B..." ? 58 : 56} />)}
          <col />
        </colgroup>
        <thead>
          <tr>
            <HeadCell><HeadText $first>Column</HeadText></HeadCell>
            <HeadCell><HeadText>Datatype</HeadText></HeadCell>
            {flags.map((f) => <HeadCell key={f}><HeadText>{f}</HeadText></HeadCell>)}
            <HeadCell><HeadText>Default / Expression</HeadText></HeadCell>
          </tr>
        </thead>
        <tbody>
          {columns.map((c) => (
            <GridRow key={c.name} $on={c.selected}>
              <Cell $top $pad={c.blank ? "3px 0 0 17px" : "3px 0 0 19px"}>
                <NameLine $dim={c.blank}>
                  {!c.blank && (c.key ? <KeyIcon /> : <Diamond />)}
                  {c.name}
                </NameLine>
              </Cell>
              <Cell>
                <SelectWrap $right={18}>
                  <TypeSelect aria-label={`Datatype of ${c.name}`} defaultValue={c.type}><option>{c.type}</option></TypeSelect>
                  <Stepper />
                </SelectWrap>
              </Cell>
              {flags.map((f) => (
                <Cell key={f} $pad="0 0 0 5px">
                  <Tick type="checkbox" aria-label={`${f} ${c.name}`} defaultChecked={(c.on || []).includes(f)} />
                </Cell>
              ))}
              <Cell $top $pad="3px 0 0 7px">{c.def}</Cell>
            </GridRow>
          ))}
        </tbody>
      </Grid>
    </GridFrame>
  );
}

function ColumnDetails() {
  return (
    <Details>
      <FormGrid $flex={891} $label={208} $gap={14}>
        <Label htmlFor="cname">Column Name:</Label>
        <Field id="cname" defaultValue="updatedAt" />
        <Label htmlFor="charset">Charset/Collation:</Label>
        <PairRow>
          <SelectWrap $grow={416}><Popup id="charset" disabled><option>Default Charset</option></Popup><Stepper color="#8a8a8a" /></SelectWrap>
          <SelectWrap $grow={236}><Popup aria-label="Collation" disabled><option>Default Collation</option></Popup><Stepper color="#8a8a8a" /></SelectWrap>
        </PairRow>
        <Label htmlFor="comments">Comments:</Label>
        <Comments id="comments" />
      </FormGrid>
      <FormGrid $flex={690} $label={155} $gap={12}>
        <Label htmlFor="dtype">Datatype:</Label>
        <SelectWrap>
          <Field id="dtype" $combo defaultValue="  DATETIME" />
          <ComboButton>
            <svg width="10" height="7" viewBox="0 0 10 7" fill="none" stroke="#eee" strokeWidth="2.4"><path d="M1 1l4 4 4-4" /></svg>
          </ComboButton>
        </SelectWrap>
        <Label htmlFor="deflt">Default</Label>
        <Field id="deflt" defaultValue="NOW() ON UPDATE NOW()" />
        <StorageLabel as="span">Storage:</StorageLabel>
        <StorageChoices $cols="212px 1fr">
          <Choice $dim><Tick type="radio" name="storage" defaultChecked disabled />VIRTUAL</Choice>
          <Choice $dim><Tick type="radio" name="storage" disabled />STORED</Choice>
        </StorageChoices>
        <ChoiceRows>
          <Choices $cols="218px 190px 1fr">
            <Choice><Tick type="checkbox" />Primary Key</Choice>
            <Choice><Tick type="checkbox" />Not NULL</Choice>
            <Choice><Tick type="checkbox" />Unique</Choice>
          </Choices>
          <Choices $cols="218px 190px 1fr">
            <Choice $dim><Tick type="checkbox" disabled />Binary</Choice>
            <Choice $dim><Tick type="checkbox" disabled />Unsigned</Choice>
            <Choice $dim><Tick type="checkbox" disabled />ZeroFill</Choice>
          </Choices>
        </ChoiceRows>
      </FormGrid>
    </Details>
  );
}

export default function App() {
  return (
    <Page>
      <Global />
      <TopTabs>
        <TopTab $w={172} $icon aria-label="Home">
          <svg width="32" height="32" viewBox="0 0 32 32"><path d="M16 1L1 17l2 2L16 5l13 14 2-2-6-6V3h-3v4z" fill="#fff" /><path d="M16 8L5 19v13h8V22h6v10h8V19z" fill="#fff" /></svg>
        </TopTab>
        <TopTab $w={242}>MySQL Model*</TopTab>
        <TopTab $w={222} $on>EER Diagram</TopTab>
        <RecDot />
      </TopTabs>
      <Toolbar>
        <ToolGroup $gap={14} $after={42}><NewModelIcon /><OpenIcon /><SaveIcon /></ToolGroup>
        <ToolGroup $gap={19} $after={43}><UndoArrow /><UndoArrow flip /></ToolGroup>
        <ToolGroup $gap={25} $after={43}><GridOffIcon /><GridIcon /></ToolGroup>
        <NewDocIcon />
        <SearchBox>
          <svg width="28" height="28" viewBox="0 0 28 28" fill="none" stroke="#e6e6e6" strokeWidth="2.4" strokeLinecap="round"><circle cx="11" cy="11" r="9.500" /><path d="M18 18l8 8" /></svg>
          <SearchInput placeholder="Search" aria-label="Search" />
        </SearchBox>
        <ToolGroup $gap={18} $after={0}><SideIcon /><SideIcon right /></ToolGroup>
      </Toolbar>

      <Main>
        <LeftCol>
          <Navigator />
          <PanelTabs><PanelTab $on>Catalog</PanelTab><PanelTab>Layers</PanelTab><PanelTab>User Types</PanelTab></PanelTabs>
          <Tree>
            <TreeNode $indent={0}>
              <svg width="14" height="10" viewBox="0 0 14 10" fill="none" stroke="#8a8a8a" strokeWidth="2"><path d="M1 1l6 7 6-7" /></svg>
              fishDatabase
            </TreeNode>
            <TreeNode $indent={96}>Tables</TreeNode>
            <TreeNode $indent={96}>Views</TreeNode>
            <TreeNode $indent={96}>Routine Groups</TreeNode>
          </Tree>
          <Grip />
          <PanelTabs><PanelTab $on>Description</PanelTab><PanelTab>Properties</PanelTab><PanelTab>History</PanelTab></PanelTabs>
          <DescSelect>
            <SelectWrap><Popup aria-label="Object"><option>Table</option></Popup><Stepper /></SelectWrap>
          </DescSelect>
          <DescText aria-label="Description" />
        </LeftCol>

        <CenterCol>
          <Canvas />
          <Editor>
            <EditorTabs>
              <EditorTab>
                fish - Table
                <svg width="26" height="26" viewBox="0 0 26 26"><circle cx="13" cy="13" r="12" fill="#7e7e7e" /><path d="M9 9l8 8M17 9l-8 8" stroke="#e8e8e8" strokeWidth="3.500" /></svg>
              </EditorTab>
            </EditorTabs>
            <EditorHead>
              <BigTableIcon />
              <HeadLabel $w={221} htmlFor="tname">Name:</HeadLabel>
              <Field id="tname" $w="580px" $bg="#3a3a3c" defaultValue="fish" />
              <SchemaText>Schema:  fishDatabase</SchemaText>
              <svg width="38" height="42" viewBox="0 0 38 42" fill="none" stroke="#bebebe" strokeWidth="7"><path d="M3 2l16 17L35 2M3 19l16 17L35 19" /></svg>
            </EditorHead>
            <ColumnGrid />
            <EditorGrip />
            <DetailsTitle>Column details 'updatedAt'</DetailsTitle>
            <ColumnDetails />
            <BottomTabs>
              {["Columns", "Indexes", "Foreign Keys", "Triggers", "Partitioning", "Options", "Inserts", "Privileges"].map((t, i) => (
                <BottomTab key={t} $on={i === 0}>{t}</BottomTab>
              ))}
              <BottomRest />
            </BottomTabs>
          </Editor>
        </CenterCol>

        <RightCol>
          <PanelTitle $h={52}>Templates</PanelTitle>
          <TemplateTools><TableIcon size={34} wrench /><TableIcon size={34} spark /></TemplateTools>
          <TemplateList>
            {templates.map(([t, s]) => (
              <TemplateItem key={t}>
                <StarCard />
                <TemplateText><TemplateName>{t}</TemplateName><p>{s}</p></TemplateText>
              </TemplateItem>
            ))}
          </TemplateList>
        </RightCol>
      </Main>
      <Status>Placed table1</Status>

      <Markup width="2560" height="1440" fill="none">
        <rect x="442" y="664" width="466" height="293" stroke={pink} strokeWidth="4" />
        {arrows.map(([x1, y1, x2, y2]) => <Arrow key={x1} x1={x1} y1={y1} x2={x2} y2={y2} />)}
      </Markup>
      {notes.map(([x, y, t]) => <Note key={t} $x={x} $y={y}>{t}</Note>)}

      <Palette>
        {paletteItems.map(([label, icon, on]) => (
          <PaletteButton key={label} aria-label={label} $on={on}>{icon}</PaletteButton>
        ))}
        <PaletteRule />
        <PaletteButton aria-label="Menu"><P sw={2.8}><path d="M1 5h34M1 18h34M1 31h34" /></P></PaletteButton>
        <CloseButton aria-label="Close"><P w={34} sw={2.6}><path d="M7 7l22 22M29 7L7 29" /></P></CloseButton>
      </Palette>
      <ExportMenu>
        <MenuItem $on>PNG</MenuItem>
        <MenuItem>PDF</MenuItem>
      </ExportMenu>
      <Toast>
        <svg width="28" height="30" viewBox="0 0 28 30" fill="none" stroke="#fff" strokeWidth="2.400">
          <circle cx="11" cy="7" r="5.500" /><path d="M13 27H2c-1-7 3-10 9-10" />
          <path d="M20 14c2 2 4 2 7 3 0 6-2 10-7 12-5-2-7-6-7-12 3-1 5-1 7-3z" fill="#6a94f0" stroke="none" />
        </svg>
        <span>Who can see what you share here? Recording On</span>
        <button aria-label="Dismiss">
          <svg width="20" height="20" viewBox="0 0 20 20" stroke="#fff" strokeWidth="2.400"><path d="M1 1l18 18M19 1L1 19" /></svg>
        </button>
      </Toast>
    </Page>
  );
}
